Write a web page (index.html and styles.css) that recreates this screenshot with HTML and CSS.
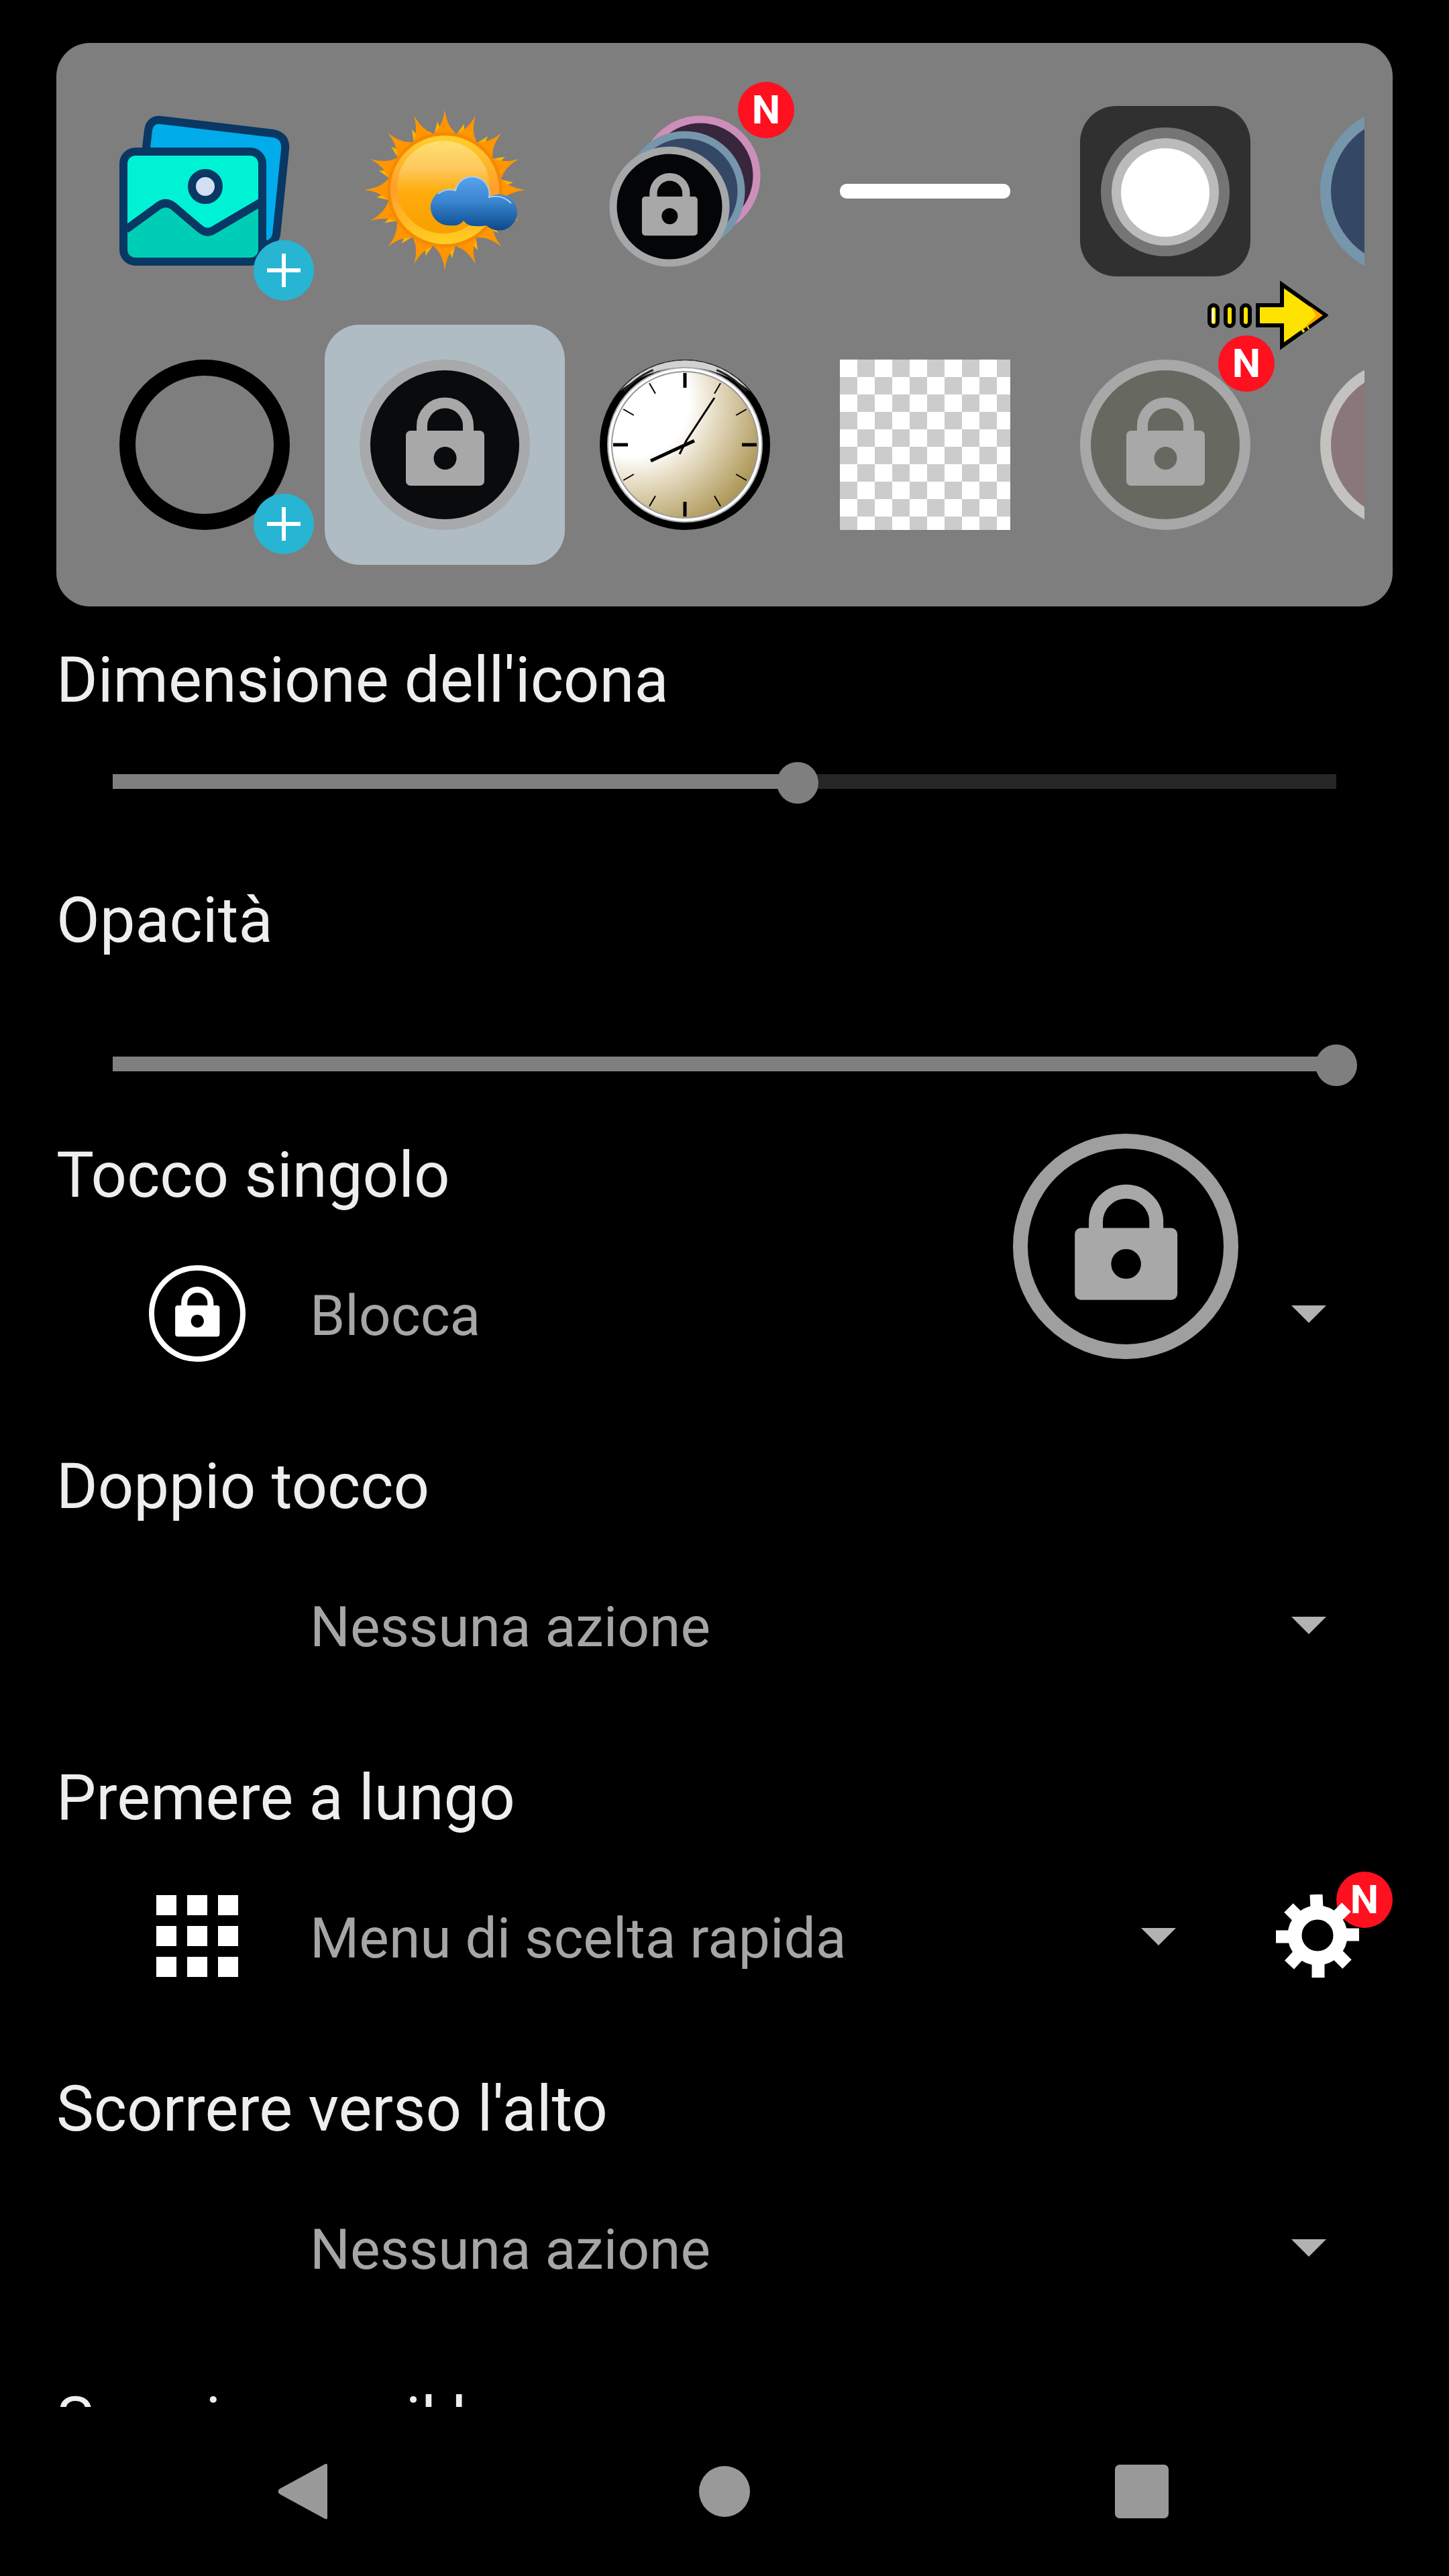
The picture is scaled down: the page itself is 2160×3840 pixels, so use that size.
FILE: index.html
```html
<!DOCTYPE html>
<html lang="it">
<head>
    <meta charset="UTF-8">
    <meta name="viewport" content="width=device-width, initial-scale=1.0">
    <title>Impostazioni icona</title>
    <link rel="stylesheet" href="styles.css">
</head>
<body>
    <!-- Shared shapes -->
    <svg class="defs" width="0" height="0" aria-hidden="true">
        <symbol id="padlock" viewBox="0 0 254 254">
            <path d="M93 110V99a34.500 34.500 0 0 1 69 0v11" fill="none" stroke="currentColor" stroke-width="16"/>
            <path fill="currentColor" fill-rule="evenodd" d="M76 106h103a7 7 0 0 1 7 7v68a7 7 0 0 1-7 7H76a7 7 0 0 1-7-7v-68a7 7 0 0 1 7-7zM127 130a17 17 0 1 0 1 0z"/>
        </symbol>
        <symbol id="plus" viewBox="0 0 90 90">
            <circle cx="45" cy="45" r="45" fill="#27b5d3"/>
            <path d="M20 45h50M45 20v50" stroke="#fff" stroke-width="6"/>
        </symbol>
    </svg>

    <main class="content">
        <!-- Icon picker -->
        <section class="picker">
            <div class="picker-row">
                <button class="cell" aria-label="Galleria">
                    <svg viewBox="0 0 254 254">
                        <path d="M40 62 43 36Q46 19 62 21L230 41Q249 45 247 65L234 192Q232 202 222 206L60 200Z" fill="#00acea" stroke="#083863" stroke-width="12"/>
                        <rect x="6" y="68" width="207" height="164" rx="18" fill="#00f2d5"/>
                        <path d="M12 184 58 150Q69 141 80 150L121 183Q131 192 142 184L207 147V226H12Z" fill="#00cdb6"/>
                        <path d="M10 184 58 149Q69 141 80 149L120 183Q131 192 142 184L210 144" fill="none" stroke="#083863" stroke-width="12"/>
                        <rect x="6" y="68" width="207" height="164" rx="18" fill="none" stroke="#083863" stroke-width="12"/>
                        <circle cx="128" cy="120" r="20" fill="#d3def3" stroke="#083863" stroke-width="12"/>
                    </svg>
                    <svg class="plus-badge"><use href="#plus"/></svg>
                </button>
                <button class="cell" aria-label="Meteo">
                    <svg viewBox="0 0 254 254">
                        <defs>
                            <linearGradient id="sun" x1="0" y1="0" x2="0" y2="1">
                                <stop offset="0" stop-color="#ffdf70"/>
                                <stop offset=".3" stop-color="#fdc85c"/>
                                <stop offset=".55" stop-color="#ffac0c"/>
                                <stop offset="1" stop-color="#f7a000"/>
                            </linearGradient>
                            <linearGradient id="sunEdge" x1="0" y1="0" x2="0" y2="1">
                                <stop offset="0" stop-color="#ffd02c"/>
                                <stop offset=".5" stop-color="#ff9d2c"/>
                                <stop offset="1" stop-color="#ffcf20"/>
                            </linearGradient>
                            <linearGradient id="cloud" x1="0" y1="0" x2="0" y2="1">
                                <stop offset="0" stop-color="#5aa2ec"/>
                                <stop offset=".45" stop-color="#3a86d0"/>
                                <stop offset="1" stop-color="#0a4a8c"/>
                            </linearGradient>
                            <g id="ray1">
                                <path d="M116 23 110 48 126 48Z" fill="#ffb400"/>
                                <path d="M127 5Q130 29 142 39L138 60H116L112 39Q124 29 127 5Z" fill="#ff9500"/>
                            </g>
                            <g id="ray2"><use href="#ray1"/><use href="#ray1" transform="rotate(22.500 127 125)"/></g>
                            <g id="ray4"><use href="#ray2"/><use href="#ray2" transform="rotate(45 127 125)"/></g>
                            <g id="ray8"><use href="#ray4"/><use href="#ray4" transform="rotate(90 127 125)"/></g>
                        </defs>
                        <use href="#ray8"/>
                        <use href="#ray8" transform="rotate(180 127 125)"/>
                        <circle cx="127" cy="125" r="86" fill="#f58a00"/>
                        <circle cx="127" cy="125" r="81" fill="url(#sunEdge)"/>
                        <circle cx="125" cy="121" r="69" fill="url(#sun)"/>
                        <path d="M134 178A27 27 0 1 1 143 126A25 25 0 0 1 193 136A27 27 0 1 1 189 178Q181 180 173 179Q162 180 155 171Q148 180 134 178Z" fill="url(#cloud)"/>
                        <path d="M117 131Q128 122 143 126A25 25 0 0 1 193 136Q213 131 226 145" fill="none" stroke="#a8cdf4" stroke-width="2"/>
                    </svg>
                </button>
                <button class="cell" aria-label="Blocco multiplo">
                    <svg viewBox="0 0 254 254">
                        <circle cx="150" cy="104" r="84" fill="#38263c" stroke="#cc8fb9" stroke-width="11"/>
                        <circle cx="127" cy="127" r="84" fill="#344866" stroke="#7596ab" stroke-width="11"/>
                        <circle cx="104" cy="150" r="84" fill="#040506" stroke="#a6a7a8" stroke-width="11"/>
                        <use class="lock-gray" href="#padlock" x="14" y="60" width="180" height="180"/>
                    </svg>
                    <span class="new-badge">N</span>
                </button>
                <button class="cell" aria-label="Barra">
                    <svg viewBox="0 0 254 254"><rect y="116" width="254" height="22" rx="10" fill="#fff"/></svg>
                </button>
                <button class="cell" aria-label="Tocco assistito">
                    <svg viewBox="0 0 254 254">
                        <rect width="254" height="254" rx="54" fill="#303030"/>
                        <circle cx="127" cy="128" r="96" fill="#757575"/>
                        <circle cx="127" cy="128" r="80" fill="#bbb"/>
                        <circle cx="127" cy="129" r="66" fill="#fff"/>
                    </svg>
                </button>
                <button class="cell" aria-label="Cerchio blu">
                    <svg viewBox="0 0 254 254"><circle cx="127" cy="127" r="119" fill="#344866" stroke="#7596ab" stroke-width="16"/></svg>
                </button>
            </div>
            <div class="picker-row">
                <button class="cell" aria-label="Anello">
                    <svg viewBox="0 0 254 254"><circle cx="127" cy="127" r="115" fill="none" stroke="#000" stroke-width="24"/></svg>
                    <svg class="plus-badge"><use href="#plus"/></svg>
                </button>
                <button class="cell selected" aria-label="Blocco" aria-pressed="true">
                    <svg viewBox="0 0 254 254">
                        <circle cx="127" cy="127" r="119" fill="#090b0d" stroke="#a8a9aa" stroke-width="16"/>
                        <use class="lock-gray" href="#padlock" width="254" height="254"/>
                    </svg>
                </button>
                <button class="cell" aria-label="Orologio">
                    <svg viewBox="0 0 254 254">
                        <defs>
                            <radialGradient id="face" cx=".15" cy=".2" r="1">
                                <stop offset="0" stop-color="#fff"/>
                                <stop offset=".38" stop-color="#fff"/>
                                <stop offset=".55" stop-color="#e8dfc8"/>
                                <stop offset=".93" stop-color="#b09b5c"/>
                                <stop offset="1" stop-color="#a89252"/>
                            </radialGradient>
                            <g id="hours">
                                <path d="M127 20v22" stroke-width="5"/>
                                <path d="M127 21v18" stroke-width="2" transform="rotate(30 127 127)"/>
                                <path d="M127 21v18" stroke-width="2" transform="rotate(60 127 127)"/>
                            </g>
                        </defs>
                        <circle cx="127" cy="127" r="127" fill="#000"/>
                        <path d="M30 47A125 125 0 0 1 224 47A152 152 0 0 0 30 47Z" fill="#d2d2d2" stroke="#444" stroke-width="1"/>
                        <path d="M36 47A121 121 0 0 1 218 47" fill="none" stroke="#222" stroke-width="3"/>
                        <path d="M80 16A121 121 0 0 1 174 16" fill="none" stroke="#d2d2d2" stroke-width="6"/>
                        <circle cx="127" cy="127" r="116" fill="#aaa"/>
                        <circle cx="127" cy="127" r="114" fill="#fff"/>
                        <circle cx="127" cy="127" r="109" fill="url(#face)" stroke="#999" stroke-width="2"/>
                        <g stroke="#000">
                            <use href="#hours"/>
                            <use href="#hours" transform="rotate(90 127 127)"/>
                            <use href="#hours" transform="rotate(180 127 127)"/>
                            <use href="#hours" transform="rotate(270 127 127)"/>
                            <path d="M119 141 129 121 171 57" stroke-width="3" fill="none"/>
                            <path d="M141 121 76 151" stroke-width="5"/>
                        </g>
                    </svg>
                </button>
                <button class="cell" aria-label="Trasparente"><span class="checker"></span></button>
                <button class="cell" aria-label="Blocco chiaro">
                    <svg viewBox="0 0 254 254">
                        <circle cx="127" cy="127" r="119" fill="#676961" stroke="#a8a8a8" stroke-width="16"/>
                        <use class="lock-gray" href="#padlock" width="254" height="254"/>
                    </svg>
                    <span class="new-badge">N</span>
                </button>
                <button class="cell" aria-label="Cerchio rosa">
                    <svg viewBox="0 0 254 254"><circle cx="127" cy="127" r="119" fill="#897779" stroke="#c4c2be" stroke-width="16"/></svg>
                </button>
            </div>
            <svg class="scroll-hint" viewBox="0 0 180 104" aria-hidden="true">
                <g fill="#ffe300" stroke="#000" stroke-width="6">
                    <rect x="3" y="37" width="12" height="31" rx="6"/>
                    <rect x="27" y="37" width="12" height="31" rx="6"/>
                    <rect x="51" y="37" width="12" height="31" rx="6"/>
                    <path d="M75 37H111V6L176 52 111 98V67H75Z"/>
                </g>
                <path d="M8 42v21" stroke="#fff" stroke-width="3"/>
                <path d="M152 38 172 52 140 75 162 52Z" fill="#ffa800"/>
                <path d="M141 76l3-2M149 71l2-1" stroke="#ffe300" stroke-width="5"/>
            </svg>
        </section>

        <!-- Sliders -->
        <section class="setting size-setting">
            <label class="title" for="size">Dimensione dell'icona</label>
            <input type="range" id="size" class="slider" min="0" max="100" value="56" style="--value: 56%">
        </section>
        <section class="setting opacity-setting">
            <label class="title" for="opacity">Opacità</label>
            <input type="range" id="opacity" class="slider" min="0" max="100" value="100" style="--value: 100%">
        </section>

        <!-- Gestures -->
        <section class="setting gesture">
            <label class="title" for="single-tap">Tocco singolo</label>
            <div class="action">
                <span class="action-icon">
                    <svg width="144" height="144" viewBox="0 0 144 144">
                        <circle cx="72" cy="72" r="68" fill="none" stroke="#fff" stroke-width="8"/>
                        <use class="lock-white" href="#padlock" width="144" height="144"/>
                    </svg>
                </span>
                <div class="dropdown">
                    <select id="single-tap"><option>Blocca</option></select>
                </div>
            </div>
        </section>
        <section class="setting gesture">
            <label class="title" for="double-tap">Doppio tocco</label>
            <div class="action">
                <span class="action-icon"></span>
                <div class="dropdown">
                    <select id="double-tap"><option>Nessuna azione</option></select>
                </div>
            </div>
        </section>
        <section class="setting gesture">
            <label class="title" for="long-press">Premere a lungo</label>
            <div class="action">
                <span class="action-icon">
                    <svg width="122" height="122" viewBox="0 0 122 122">
                        <path fill="#fff" d="M0 0h30v30H0zM46 0h30v30H46zM92 0h30v30H92zM0 46h30v30H0zM46 46h30v30H46zM92 46h30v30H92zM0 92h30v30H0zM46 92h30v30H46zM92 92h30v30H92z"/>
                    </svg>
                </span>
                <div class="dropdown">
                    <select id="long-press"><option>Menu di scelta rapida</option></select>
                </div>
                <button class="gear" aria-label="Configura">
                    <span class="new-badge">N</span>
                    <svg width="124" height="124" viewBox="0 0 124 124">
                        <circle cx="62" cy="61" r="34" fill="none" stroke="#fff" stroke-width="21"/>
                        <g stroke="#fff" stroke-width="19">
                            <path d="M60 0 61 20M63 102V124M0 63H20M102 60H124"/>
                            <path d="M19 20 33 34M105 19 91 33M20 105 33 91M106 104 92 90"/>
                        </g>
                    </svg>
                </button>
            </div>
        </section>
        <section class="setting gesture">
            <label class="title" for="swipe-up">Scorrere verso l'alto</label>
            <div class="action">
                <span class="action-icon"></span>
                <div class="dropdown">
                    <select id="swipe-up"><option>Nessuna azione</option></select>
                </div>
            </div>
        </section>
        <section class="setting gesture">
            <h2 class="title">Scorri verso il basso</h2>
        </section>

        <!-- Floating icon -->
        <svg class="floating-lock" viewBox="0 0 336 336" aria-hidden="true">
            <circle cx="168" cy="168" r="157" fill="#000" stroke="#9f9f9f" stroke-width="22"/>
            <use class="lock-gray" href="#padlock" x="2" y="2" width="332" height="332"/>
        </svg>
    </main>

    <!-- System navigation -->
    <nav class="navbar">
        <button aria-label="Indietro">
            <svg width="90" height="84" viewBox="0 0 90 84"><path d="M75 3V81Q75 85 70 82L4 46Q-1 42 4 38L70 2Q75 -1 75 3Z" fill="#999"/></svg>
        </button>
        <button aria-label="Home">
            <svg width="76" height="76" viewBox="0 0 76 76"><circle cx="38" cy="38" r="38" fill="#999"/></svg>
        </button>
        <button aria-label="Recenti">
            <svg width="80" height="80" viewBox="0 0 80 80"><rect width="80" height="80" rx="7" fill="#999"/></svg>
        </button>
    </nav>
</body>
</html>
```

FILE: styles.css
```css
* {
    box-sizing: border-box;
}

body {
    display: flex;
    flex-direction: column;
    height: 100vh;
    margin: 0;
    background-color: #000;
    color: #eee;
    font-family: Roboto, sans-serif;
}

button {
    padding: 0;
    border: none;
    background: none;
    cursor: pointer;
}

svg {
    display: block;
}

.defs {
    position: absolute;
}

.content {
    position: relative;
    flex: 1;
    min-height: 0;
    padding: 64px 84px 0;
    overflow: hidden;
}

/* Icon picker */
.picker {
    position: relative;
    padding: 42px;
    border-radius: 50px;
    background-color: #7e7e7e;
}

.picker-row {
    display: flex;
    margin-bottom: 20px;
    overflow: hidden;
}

.cell {
    position: relative;
    flex: none;
    width: 358px;
    height: 358px;
    padding: 52px;
    border-radius: 52px;
}

.cell.selected {
    background-color: #b0bcc4;
}

.checker {
    display: block;
    height: 100%;
    background: conic-gradient(#fff 25%, #ccc 0 50%, #fff 0 75%, #ccc 0) 26px 0 / 52px 52px;
}

.plus-badge {
    position: absolute;
    right: 16px;
    bottom: 16px;
    width: 90px;
    height: 90px;
}

.new-badge {
    position: absolute;
    top: 16px;
    right: 16px;
    width: 84px;
    border-radius: 50%;
    background-color: #ff101f;
    color: #fff;
    font: bold 60px/84px Roboto, sans-serif;
    text-align: center;
}

.scroll-hint {
    position: absolute;
    top: 354px;
    right: 96px;
    width: 180px;
}

.lock-gray {
    color: #a8a8a8;
}

.lock-white {
    color: #fff;
}

/* Settings */
.setting {
    display: flex;
    flex-direction: column;
}

.title {
    margin: 0;
    font-size: 94px;
    font-weight: normal;
    line-height: 110px;
}

.size-setting {
    gap: 67px;
    margin-top: 55px;
}

.opacity-setting {
    gap: 130px;
    margin-top: 119px;
    margin-bottom: 78px;
}

.slider {
    appearance: none;
    height: 62px;
    margin: 0 53px;
    background: linear-gradient(to right, #7f7f7f var(--value), #262626 var(--value)) 50% 18px / calc(100% - 62px) 22px no-repeat;
}

.slider::-webkit-slider-thumb {
    appearance: none;
    width: 62px;
    height: 62px;
    border-radius: 50%;
    background-color: #7f7f7f;
}

.gesture {
    gap: 25px;
    margin-bottom: 77px;
}

.action {
    display: flex;
    height: 252px;
    padding-left: 42px;
}

.action-icon {
    display: flex;
    align-items: center;
    justify-content: center;
    width: 336px;
}

.dropdown {
    position: relative;
    flex: 1;
}

.dropdown::after {
    content: "";
    position: absolute;
    top: 50%;
    right: 99px;
    width: 52px;
    height: 26px;
    margin-top: -12px;
    background-color: #b2b2b2;
    clip-path: polygon(0 0, 100% 0, 50% 100%);
    pointer-events: none;
}

select {
    appearance: none;
    width: 100%;
    height: 100%;
    padding: 6px 180px 0 0;
    border: none;
    background: none;
    color: #a6a6a6;
    font: 84px Roboto, sans-serif;
}

.gear {
    position: relative;
    display: flex;
    align-items: center;
    justify-content: center;
    width: 224px;
}

.gear svg {
    position: relative;
}

.gear .new-badge {
    top: 30px;
    right: 0;
}

.floating-lock {
    position: absolute;
    top: 1690px;
    right: 314px;
    width: 336px;
}

/* System navigation */
.navbar {
    display: flex;
    height: 252px;
    padding: 0 147px;
}

.navbar button {
    display: flex;
    flex: 1;
    align-items: center;
    justify-content: center;
}
```
